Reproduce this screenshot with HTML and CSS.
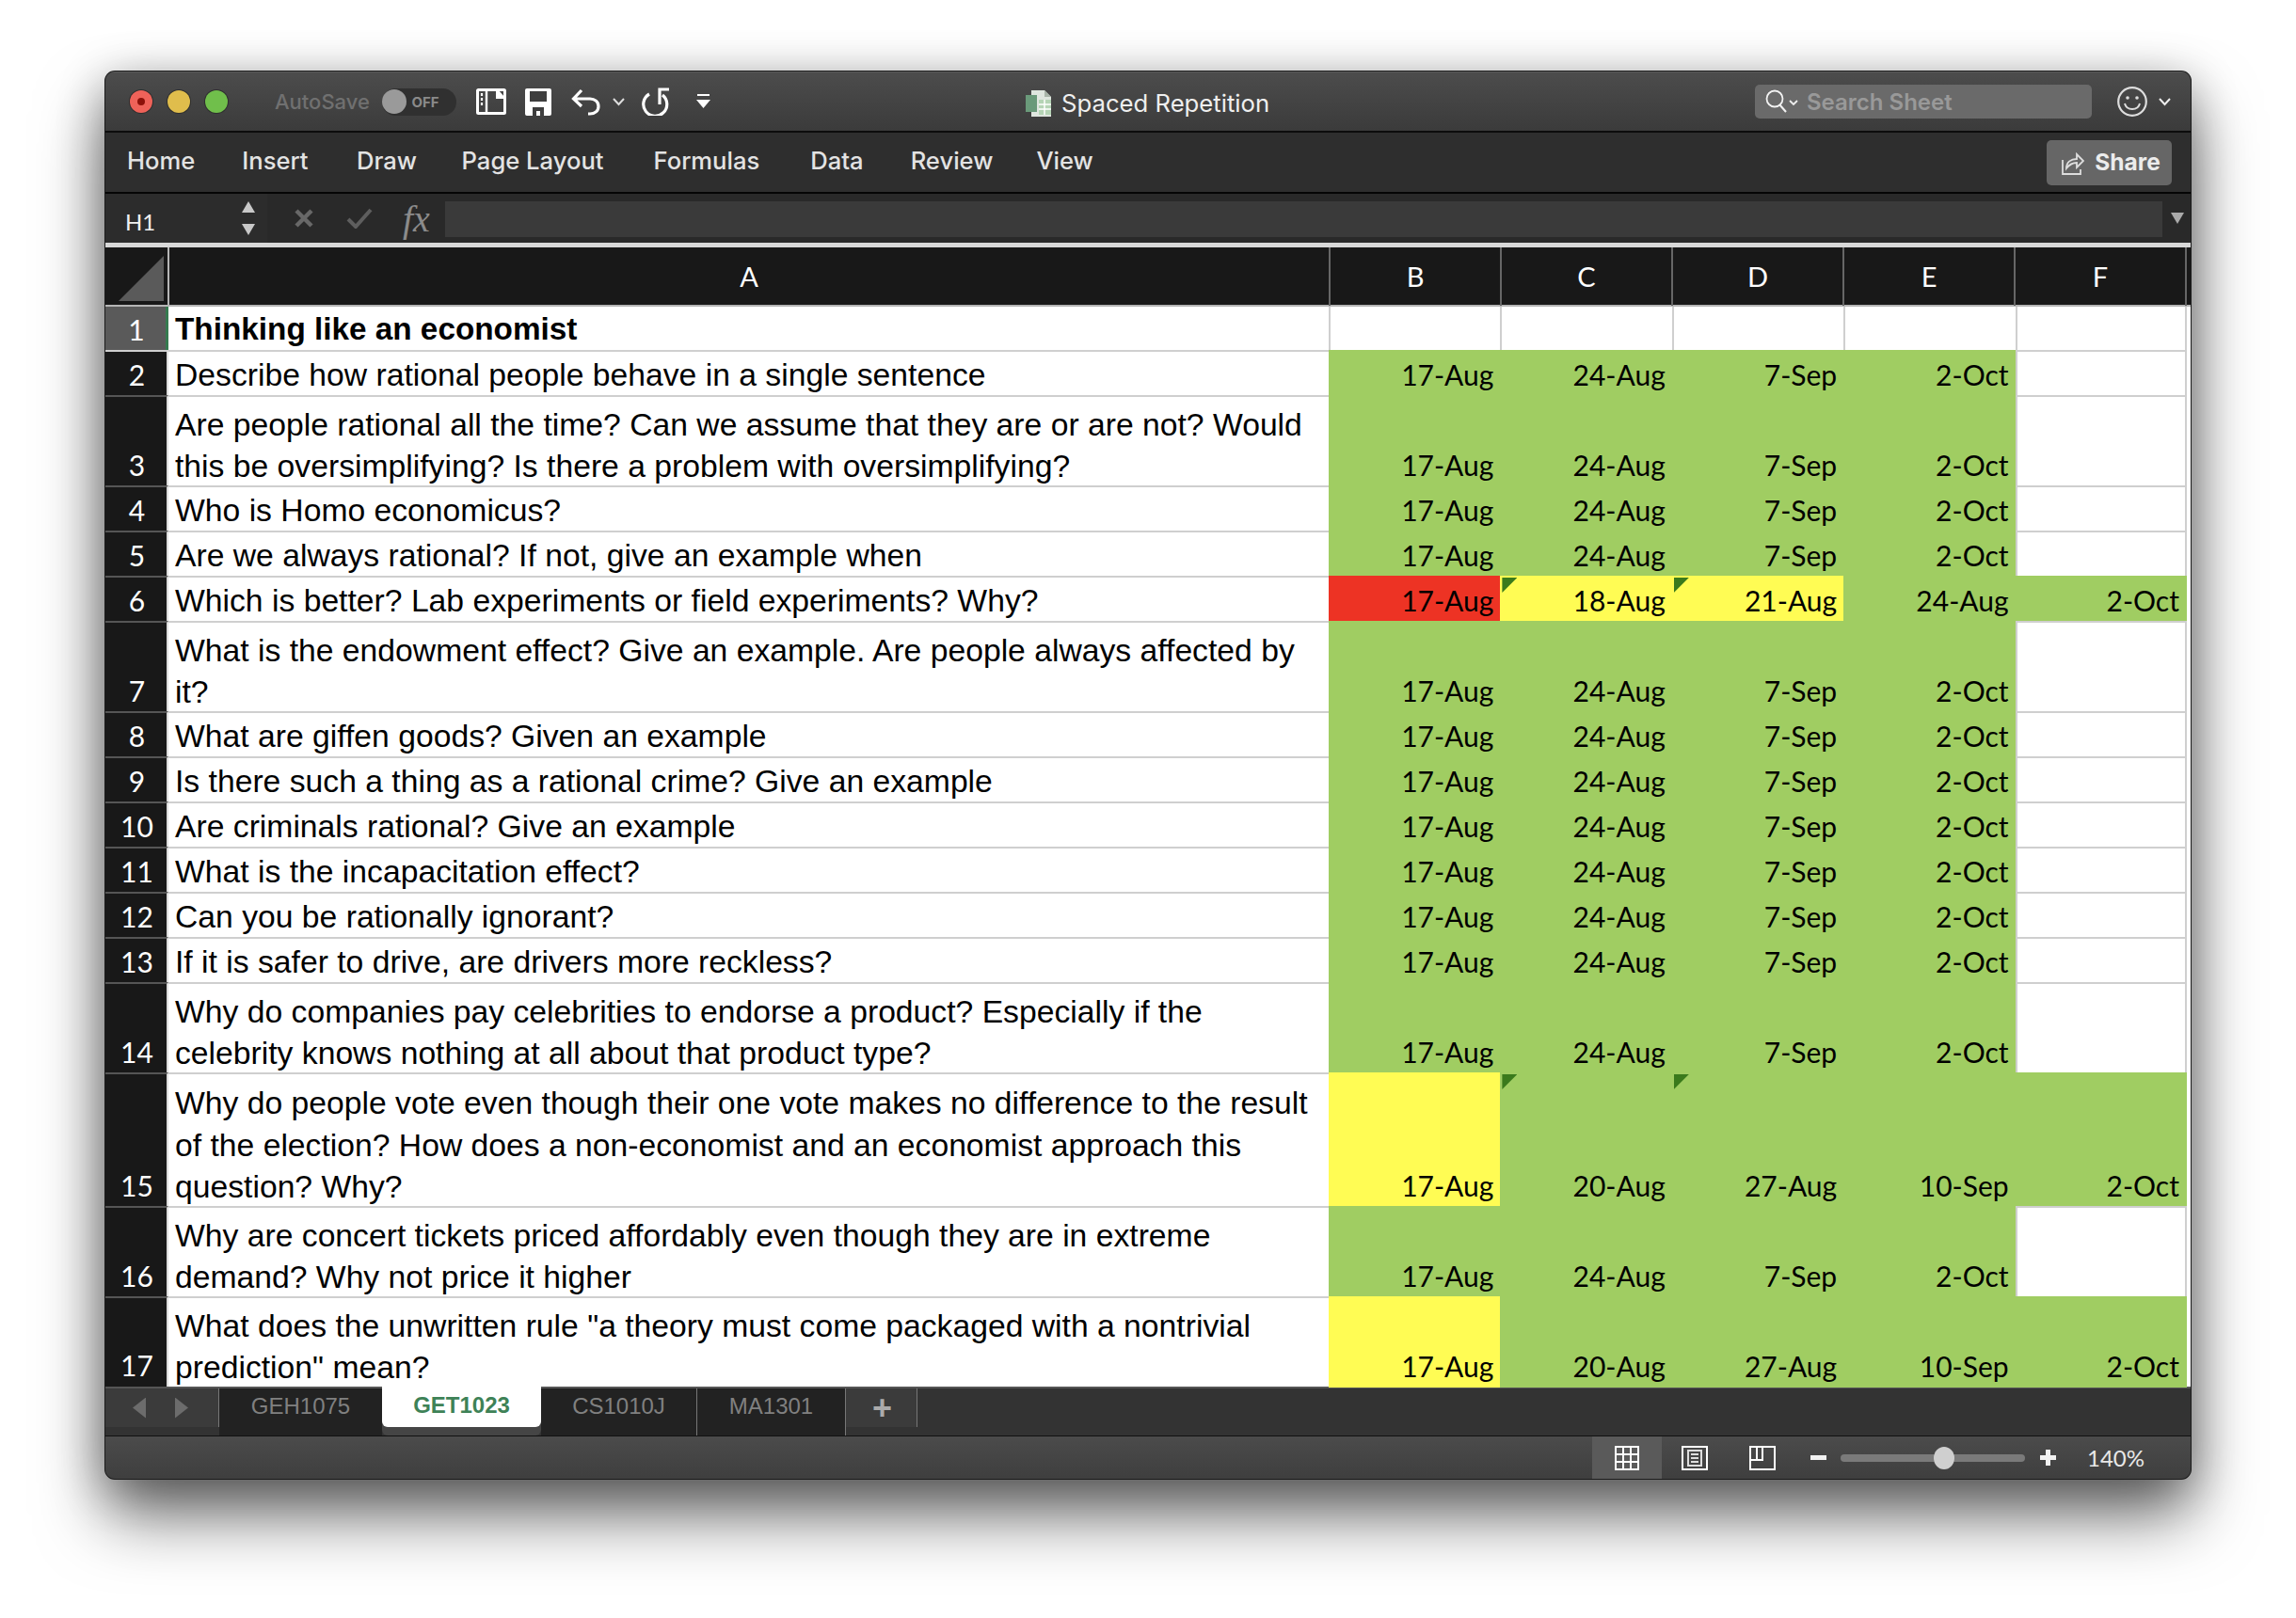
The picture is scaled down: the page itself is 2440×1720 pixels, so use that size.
FILE: index.html
```html
<!DOCTYPE html>
<html lang="en">
<head>
<meta charset="utf-8">
<title>Spaced Repetition</title>
<link rel="stylesheet" href="styles.css">
</head>
<body>
<div class="window">
  <header class="titlebar">
    <div class="lights"><span class="light red"><i></i></span><span class="light yellow"></span><span class="light green"></span></div>
    <span class="autosave">AutoSave</span>
    <span class="toggle"><i></i><b>OFF</b></span>
    <svg class="ic ic-book" width="32" height="28" viewBox="0 0 32 28"><rect x="1.500" y="1.500" width="29" height="25" rx="1" fill="none" stroke="#fff" stroke-width="3"/><path d="M11 1v26" fill="none" stroke="#fff" stroke-width="2.400"/><path d="M21 2h3l6 7v2h-9z" fill="#fff"/><path d="M6 5v3M6 10v3M6 15v3" stroke="#fff" stroke-width="2.200"/></svg>
    <svg class="ic ic-save" width="28" height="29" viewBox="0 0 28 29"><path d="M2 0h24a2 2 0 0 1 2 2v25a2 2 0 0 1-2 2H2a2 2 0 0 1-2-2V2a2 2 0 0 1 2-2z" fill="#fff"/><rect x="5" y="3" width="18" height="11" fill="#3e3e3e"/><path d="M8 29v-9h12v9h-4v-5h-4v5z" fill="#3e3e3e"/></svg>
    <svg class="ic ic-undo" width="31" height="29" viewBox="0 0 31 29"><path d="M11 2L2.500 11l8.500 8M3 11h17c5 0 9 3 9 8s-4 8-9 8h-2" fill="none" stroke="#fff" stroke-width="3.200"/></svg>
    <svg class="ic ic-chev" width="13" height="9" viewBox="0 0 13 9"><path d="M1 1l5.500 6L12 1" fill="none" stroke="#ddd" stroke-width="2"/></svg>
    <svg class="ic ic-redo" width="30" height="30" viewBox="0 0 30 30"><path d="M8 7A12.500 12.500 0 1 0 22 8M19 18V2h10" fill="none" stroke="#fff" stroke-width="3.200"/></svg>
    <svg class="ic ic-more" width="15" height="16" viewBox="0 0 15 16"><path d="M1 1h13" stroke="#fff" stroke-width="2"/><path d="M0 6h15l-7.500 9z" fill="#fff"/></svg>
    <div class="doc-title">
      <svg width="28" height="28" viewBox="0 0 28 28"><path d="M6 0h14l7 7v21H6z" fill="#dfe6df"/><path d="M20 0v7h7z" fill="#a9b5a9"/><path d="M14 10h13v16H14z" fill="#b5d4b5"/><path d="M14 15h13M14 20h13M20 10v16" stroke="#fff" stroke-width="1.500"/><rect x="0" y="5" width="12" height="18" fill="#6a9a7a"/></svg>
      <span>Spaced Repetition</span>
    </div>
    <div class="search">
      <svg width="24" height="26" viewBox="0 0 24 26"><circle cx="10" cy="10" r="8.500" fill="none" stroke="#f2f2f2" stroke-width="1.800"/><path d="M15 16l7 8" stroke="#f2f2f2" stroke-width="2"/></svg>
      <svg class="search-chev" width="10" height="7" viewBox="0 0 10 7"><path d="M1 1l4 4 4-4" fill="none" stroke="#eee" stroke-width="1.800"/></svg>
      <span>Search Sheet</span>
    </div>
    <svg class="ic ic-smile" width="32" height="32" viewBox="0 0 32 32"><circle cx="16" cy="16" r="14.800" fill="none" stroke="#ddd" stroke-width="2.200"/><circle cx="11" cy="12" r="1.800" fill="#ddd"/><circle cx="21" cy="12" r="1.800" fill="#ddd"/><path d="M8 18c2 8 14 8 16 0" fill="none" stroke="#ddd" stroke-width="2"/></svg>
    <svg class="ic ic-chev2" width="13" height="9" viewBox="0 0 13 9"><path d="M1 1l5.500 6L12 1" fill="none" stroke="#eee" stroke-width="2"/></svg>
  </header>
  <nav class="ribbon">
    <span>Home</span><span>Insert</span><span>Draw</span><span>Page Layout</span><span>Formulas</span><span>Data</span><span>Review</span><span>View</span>
    <button class="share">
      <svg width="24" height="30" viewBox="0 0 24 30"><path d="M1 13v15h19v-5" fill="none" stroke="#ddd" stroke-width="1.800"/><path d="M5 22c0-7 5-10 11-10V7l7 7-7 7v-5c-5 0-8 2-11 6z" fill="none" stroke="#ddd" stroke-width="1.800"/></svg>
      Share
    </button>
  </nav>
  <section class="formula">
    <div class="namebox"><span>H1</span><div class="steppers"><i class="up"></i><i class="down"></i></div></div>
    <svg class="fx-ic" width="20" height="20" viewBox="0 0 20 20"><path d="M2 2l16 16M18 2L2 18" stroke="#686868" stroke-width="4.500"/></svg>
    <svg class="fx-ic fx-check" width="28" height="22" viewBox="0 0 28 22"><path d="M2 12l8 8L26 2" fill="none" stroke="#5e5e5e" stroke-width="4"/></svg>
    <span class="fx">fx</span>
    <div class="input"></div>
    <i class="expand"></i>
  </section>
  <main class="sheet">
    <div class="row head"><div class="corner"><i></i></div><div>A</div><div>B</div><div>C</div><div>D</div><div>E</div><div>F</div><div class="edge"></div></div>

    <div class="row h1 top"><div class="num sel">1</div><div class="q bold">Thinking like an economist</div><div class="d"></div><div class="d"></div><div class="d"></div><div class="d"></div><div class="d"></div><div class="tail"></div></div>
    <div class="row h1"><div class="num">2</div><div class="q">Describe how rational people behave in a single sentence</div><div class="d g">17-Aug</div><div class="d g">24-Aug</div><div class="d g">7-Sep</div><div class="d g">2-Oct</div><div class="d"></div><div class="tail"></div></div>
    <div class="row h2"><div class="num">3</div><div class="q">Are people rational all the time? Can we assume that they are or are not? Would<br>this be oversimplifying? Is there a problem with oversimplifying?</div><div class="d g">17-Aug</div><div class="d g">24-Aug</div><div class="d g">7-Sep</div><div class="d g">2-Oct</div><div class="d"></div><div class="tail"></div></div>
    <div class="row h1"><div class="num">4</div><div class="q">Who is Homo economicus?</div><div class="d g">17-Aug</div><div class="d g">24-Aug</div><div class="d g">7-Sep</div><div class="d g">2-Oct</div><div class="d"></div><div class="tail"></div></div>
    <div class="row h1"><div class="num">5</div><div class="q">Are we always rational? If not, give an example when</div><div class="d g">17-Aug</div><div class="d g">24-Aug</div><div class="d g">7-Sep</div><div class="d g">2-Oct</div><div class="d"></div><div class="tail"></div></div>
    <div class="row h1"><div class="num">6</div><div class="q">Which is better? Lab experiments or field experiments? Why?</div><div class="d r">17-Aug</div><div class="d y note">18-Aug</div><div class="d y note">21-Aug</div><div class="d g">24-Aug</div><div class="d g">2-Oct</div><div class="tail"></div></div>
    <div class="row h2"><div class="num">7</div><div class="q">What is the endowment effect? Give an example. Are people always affected by<br>it?</div><div class="d g">17-Aug</div><div class="d g">24-Aug</div><div class="d g">7-Sep</div><div class="d g">2-Oct</div><div class="d"></div><div class="tail"></div></div>
    <div class="row h1"><div class="num">8</div><div class="q">What are giffen goods? Given an example</div><div class="d g">17-Aug</div><div class="d g">24-Aug</div><div class="d g">7-Sep</div><div class="d g">2-Oct</div><div class="d"></div><div class="tail"></div></div>
    <div class="row h1"><div class="num">9</div><div class="q">Is there such a thing as a rational crime? Give an example</div><div class="d g">17-Aug</div><div class="d g">24-Aug</div><div class="d g">7-Sep</div><div class="d g">2-Oct</div><div class="d"></div><div class="tail"></div></div>
    <div class="row h1"><div class="num">10</div><div class="q">Are criminals rational? Give an example</div><div class="d g">17-Aug</div><div class="d g">24-Aug</div><div class="d g">7-Sep</div><div class="d g">2-Oct</div><div class="d"></div><div class="tail"></div></div>
    <div class="row h1"><div class="num">11</div><div class="q">What is the incapacitation effect?</div><div class="d g">17-Aug</div><div class="d g">24-Aug</div><div class="d g">7-Sep</div><div class="d g">2-Oct</div><div class="d"></div><div class="tail"></div></div>
    <div class="row h1"><div class="num">12</div><div class="q">Can you be rationally ignorant?</div><div class="d g">17-Aug</div><div class="d g">24-Aug</div><div class="d g">7-Sep</div><div class="d g">2-Oct</div><div class="d"></div><div class="tail"></div></div>
    <div class="row h1"><div class="num">13</div><div class="q">If it is safer to drive, are drivers more reckless?</div><div class="d g">17-Aug</div><div class="d g">24-Aug</div><div class="d g">7-Sep</div><div class="d g">2-Oct</div><div class="d"></div><div class="tail"></div></div>
    <div class="row h2"><div class="num">14</div><div class="q">Why do companies pay celebrities to endorse a product? Especially if the<br>celebrity knows nothing at all about that product type?</div><div class="d g">17-Aug</div><div class="d g">24-Aug</div><div class="d g">7-Sep</div><div class="d g">2-Oct</div><div class="d"></div><div class="tail"></div></div>
    <div class="row h3"><div class="num">15</div><div class="q">Why do people vote even though their one vote makes no difference to the result<br>of the election? How does a non-economist and an economist approach this<br>question? Why?</div><div class="d y">17-Aug</div><div class="d g note">20-Aug</div><div class="d g note">27-Aug</div><div class="d g">10-Sep</div><div class="d g">2-Oct</div><div class="tail"></div></div>
    <div class="row h2"><div class="num">16</div><div class="q">Why are concert tickets priced affordably even though they are in extreme<br>demand? Why not price it higher</div><div class="d g">17-Aug</div><div class="d g">24-Aug</div><div class="d g">7-Sep</div><div class="d g">2-Oct</div><div class="d"></div><div class="tail"></div></div>
    <div class="row h2 last"><div class="num">17</div><div class="q">What does the unwritten rule "a theory must come packaged with a nontrivial<br>prediction" mean?</div><div class="d y">17-Aug</div><div class="d g">20-Aug</div><div class="d g">27-Aug</div><div class="d g">10-Sep</div><div class="d g">2-Oct</div><div class="tail"></div></div>
  </main>
  <div class="tabs">
    <div class="tab-nav"><i class="al"></i><i class="ar"></i></div>
    <span class="tab t1">GEH1075</span>
    <span class="tab active">GET1023</span>
    <span class="tab t3 sep">CS1010J</span>
    <span class="tab t4 sep">MA1301</span>
    <span class="add">+</span>
  </div>
  <footer class="status">
    <div class="view on"><svg width="26" height="26" viewBox="0 0 26 26"><path d="M1 1h24v24H1zM9 1v24M17 1v24M1 9h24M1 17h24" fill="none" stroke="#fff" stroke-width="2"/></svg></div>
    <div class="view"><svg width="28" height="26" viewBox="0 0 28 26"><path d="M1 1h26v24H1z" fill="none" stroke="#fff" stroke-width="2"/><path d="M7 5h14v16H7z" fill="none" stroke="#ddd" stroke-width="2"/><path d="M10 9h8M10 13h8M10 17h8" stroke="#ddd" stroke-width="2"/></svg></div>
    <div class="view"><svg width="28" height="26" viewBox="0 0 28 26"><path d="M1 1h26v24H1zM1 15h13V1M14 1v14M8 1v14" fill="none" stroke="#fff" stroke-width="2"/></svg></div>
    <span class="zoom-btn minus"></span>
    <div class="slider"><i></i></div>
    <span class="zoom-btn plus"></span>
    <span class="pct">140%</span>
  </footer>
</div>
</body>
</html>
```

FILE: styles.css
```css
* { box-sizing: border-box; }
html, body { margin: 0; height: 100%; background: #fff; overflow: hidden; }
body { font-family: Inter, "Liberation Sans", sans-serif; }

.window {
  width: 2216px; height: 1496px; margin: 76px 0 0 112px;
  border-radius: 10px; overflow: hidden; display: flex; flex-direction: column;
  background: #333;
  box-shadow: 0 0 0 1px #1c1c1c, 0 40px 70px rgba(0,0,0,.55), 0 10px 50px rgba(0,0,0,.32);
}

/* title bar */
.titlebar {
  height: 65px; flex: none; display: flex; align-items: center; position: relative;
  background: linear-gradient(#4c4c4c, #3b3b3b);
  border-bottom: 2px solid #0c0c0c; border-top: 1px solid #5a5a5a;
}
.lights { display: flex; gap: 16px; margin-left: 26px; }
.light { width: 24px; height: 24px; border-radius: 50%; display: flex; align-items: center; justify-content: center; box-shadow: 0 0 0 1px #2e2e2e; }
.light.red { background: #ee6259; }
.light.red i { width: 8px; height: 8px; border-radius: 50%; background: #8c1009; }
.light.yellow { background: #e0bd4c; }
.light.green { background: #70bf4b; }
.autosave { margin-left: 50px; width: 113.500px; font-size: 22px; font-weight: 500; color: #707070; white-space: nowrap; }
.toggle { width: 79px; height: 29px; border-radius: 15px; background: #303030; display: flex; align-items: center; }
.toggle i { width: 26px; height: 26px; border-radius: 50%; background: #9a9a9a; }
.toggle b { margin-left: 6px; font-size: 15px; color: #8a8a8a; font-weight: 700; }
.ic { flex: none; display: block; }
.ic-book { margin-left: 21px; }
.ic-save { margin-left: 20px; }
.ic-undo { margin-left: 21px; }
.ic-chev { margin-left: 13px; }
.ic-redo { margin-left: 18px; }
.ic-more { margin-left: 28px; }
.doc-title { position: absolute; left: 978px; top: 19px; display: flex; align-items: center; gap: 10px; font-size: 25.700px; color: #efefef; white-space: nowrap; line-height: 28px; }
.search { margin-left: auto; margin-right: -6px; width: 358px; height: 36px; background: #6a6a6a; border-radius: 5px; display: flex; align-items: center; padding-left: 11px; font-size: 24px; font-weight: 600; color: #999; white-space: nowrap; }
.search-chev { margin: 2px 9px 0 1px; }
.ic-smile { margin-left: 33px; }
.ic-chev2 { margin: 0 21px 0 12px; }

/* ribbon */
.ribbon {
  height: 65px; flex: none; background: #2e2e2e; border-bottom: 2px solid #050505;
  display: flex; align-items: center; gap: 50px; padding: 0 0 5px 23px;
  font-size: 25.600px; font-weight: 500; color: #e3e3e3; white-space: nowrap;
}
.ribbon span:nth-child(2) { margin-right: 1.500px; }
.ribbon span:nth-child(3) { margin-right: -2.500px; }
.ribbon span:nth-child(4) { margin-right: 3px; }
.ribbon span:nth-child(5) { margin-right: 4px; }
.ribbon span:nth-child(8) { margin-left: -4px; }
.share { margin-left: auto; margin-right: 20px; margin-top: 5px; width: 133px; height: 48px; background: #666; border: 0; border-radius: 5px; display: flex; align-items: center; justify-content: center; gap: 11px; font: 700 24.500px Inter, sans-serif; color: #ececec; padding: 0 0 2px 4px; }

/* formula bar */
.formula { height: 52px; flex: none; background: #292929; display: flex; align-items: center; position: relative; }
.namebox { width: 172px; height: 52px; background: #2c2c2c; display: flex; align-items: center; justify-content: space-between; padding: 6px 13px 0 21px; font: 24px Lato, sans-serif; color: #f0f0f0; }
.steppers { display: flex; flex-direction: column; gap: 12px; margin-top: -6px; }
.steppers i { display: block; width: 14px; height: 12px; background: #c8c8c8; }
.steppers .up { clip-path: polygon(50% 0, 100% 100%, 0 100%); }
.steppers .down { clip-path: polygon(0 0, 100% 0, 50% 100%); }
.fx-ic { margin-left: 29px; flex: none; }
.fx-check { margin-left: 35px; }
.fx { margin-left: 32px; width: 49px; font: italic 40px "Liberation Serif", serif; color: #8b8b8b; }
.input { width: 1825px; height: 38px; background: #3a3a3a; margin-left: -4px; margin-top: 2px; }
.expand { margin-left: 9px; width: 14px; height: 12px; background: #aaa; clip-path: polygon(0 0, 100% 0, 50% 100%); }

/* sheet */
.sheet { flex: none; background: #fff; border-top: 5px solid #d8d8d8; }
.row { display: grid; grid-template-columns: 67px 1233px repeat(5, 182.400px) 1fr; font: 30px Lato, sans-serif; color: #000; }
.row.h1 { height: 48px; }
.row.h1.top { height: 46px; }
.row.h2 { height: 96px; }
.row.h3 { height: 142px; }
.row.head { height: 63px; grid-template-columns: 68px 1234px repeat(5, 182px) 1fr; background: #181818; color: #fff; border-bottom: 2px solid #b5b5b5; font-size: 29px; line-height: 62px; text-align: center; }
.row.head > div { border-right: 2px solid #666; }
.row.head > .corner { border-right-color: #b5b5b5; position: relative; }
.corner i { position: absolute; left: 14px; top: 9px; width: 48px; height: 48px; background: #5a5a5a; clip-path: polygon(100% 0, 100% 100%, 0 100%); }
.row.head > .edge { border-right: 0; }

.num { background: #181818; color: #fff; text-align: center; display: flex; align-items: flex-end; justify-content: center; border-top: 2px solid #555; border-right: 2px solid #ddd; line-height: 42px; padding: 0 0 1px 2px; }
.h2 .num { padding-bottom: 2px; }
.h3 .num { padding-bottom: 3px; }
.last .num { padding-bottom: 3px; }
.top + .row .num { border-top-color: #cfcfcf; }
.num.sel { background: #5a5a5a; border-top: 0; border-right: 3px solid #357a4f; }
.q { font: 33.700px/44.500px "Liberation Sans", sans-serif; padding-left: 7px; border-top: 2px solid #cfcfcf; white-space: nowrap; }
.h1 .q { line-height: 42px; padding-top: 3px; }
.h2 .q { padding-top: 7px; line-height: 44px; }
.h3 .q { padding-top: 8px; }
.q.bold { font-size: 33.300px; font-weight: 700; padding-top: 3px; border-top: 0; }
.d { display: flex; align-items: flex-end; justify-content: flex-end; padding: 0 7px 2px 0; line-height: 40px; position: relative; border-top: 2px solid #cfcfcf; border-left: 2px solid #cfcfcf; }
.h2 .d { padding-bottom: 3px; }
.h3 .d { padding-bottom: 4px; }
.last .d { padding-bottom: 3px; }
.top .d { border-top: 0; }
.d:nth-child(7) { border-right: 2px solid #cfcfcf; padding-right: 6px; }
.d.g { background: #a0cd62; border-color: #a0cd62; }
.d.y { background: #fffc54; border-color: #fffc54; }
.d.r { background: #ed3324; border-color: #ed3324; }
.note::before { content: ""; position: absolute; left: 0; top: 0; width: 16px; height: 16px; background: #3a7a1c; clip-path: polygon(0 0, 100% 0, 0 100%); }

/* sheet tabs */
.tabs { height: 53px; flex: none; background: #333; border-top: 2px solid #555; border-bottom: 1px solid #111; display: flex; font: 24px "Liberation Sans", sans-serif; color: #808080; }
.tab-nav { width: 121px; background: #3b3b3b; display: flex; align-items: center; gap: 31px; padding: 0 0 0 29px; border-right: 1px solid #777; margin-bottom: 9px; position: relative; }
.tab-nav i { width: 14px; height: 22px; background: #6c6c6c; }
.tab-nav .al { clip-path: polygon(100% 0, 100% 100%, 0 50%); }
.tab-nav .ar { clip-path: polygon(0 0, 100% 50%, 0 100%); }
.tab { display: flex; align-items: center; justify-content: center; height: 50px; padding-bottom: 12px; background: #222; }
.t1 { width: 173px; }
.t3 { width: 166px; }
.t4 { width: 158px; }
.tab.sep { border-left: 0; border-right: 1px solid #777; }
.tab.active { width: 169px; height: 43px; padding-bottom: 4px; margin-top: -2px; background: #fff; color: #3e8257; font-weight: 700; border-radius: 0 0 6px 6px; box-shadow: 0 9px 0 #454545; }
.add { width: 76px; height: 41px; background: #3b3b3b; border-right: 1px solid #777; display: flex; align-items: center; justify-content: center; padding-left: 2px; font: 700 36px "Liberation Sans", sans-serif; color: #aaa; }

/* status bar */
.status { flex: 1; background: linear-gradient(#4b4b4b, #3e3e3e); display: flex; align-items: center; padding: 0 0 2px 1580px; border-bottom: 2px solid #666; }
.view { width: 74px; height: 45px; display: flex; align-items: center; justify-content: center; margin-right: -2px; }
.view.on { background: #5a5a5a; }
.zoom-btn { position: relative; display: block; width: 17px; height: 17px; flex: none; }
.zoom-btn::before { content: ""; position: absolute; left: 0; right: 0; top: 6px; height: 5px; background: #f2f2f2; }
.plus::after { content: ""; position: absolute; top: 0; bottom: 0; left: 6px; width: 5px; background: #f2f2f2; }
.minus { margin-left: 16px; }
.slider { width: 196px; height: 8px; margin: 0 16px 0 15px; border-radius: 4px; background: #7a7a7a; position: relative; }
.slider i { position: absolute; left: 99px; top: -8px; width: 22px; height: 24px; border-radius: 50%; background: #cfcfcf; }
.pct { margin-left: 33px; font: 24px Lato, sans-serif; color: #e8e8e8; }
```
